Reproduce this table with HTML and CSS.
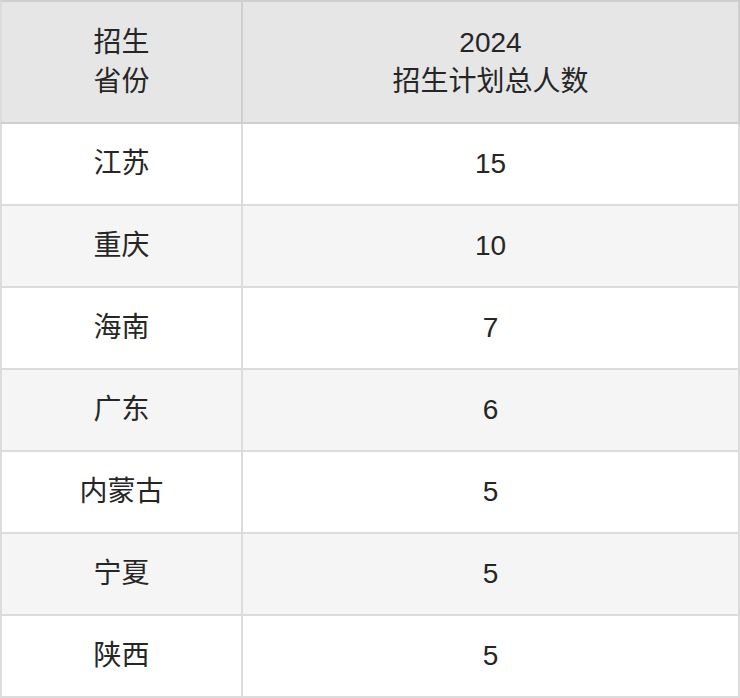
FILE: index.html
```html
<!DOCTYPE html>
<html lang="zh-CN">
<head>
<meta charset="utf-8">
<title>招生计划</title>
<link rel="stylesheet" href="styles.css">
</head>
<body>
<table class="plan">
  <thead>
    <tr>
      <th class="c1">招生<br>省份</th>
      <th class="c2">2024<br>招生计划总人数</th>
    </tr>
  </thead>
  <tbody>
    <tr><td class="c1">江苏</td><td class="c2">15</td></tr>
    <tr><td class="c1">重庆</td><td class="c2">10</td></tr>
    <tr><td class="c1">海南</td><td class="c2">7</td></tr>
    <tr><td class="c1">广东</td><td class="c2">6</td></tr>
    <tr><td class="c1">内蒙古</td><td class="c2">5</td></tr>
    <tr><td class="c1">宁夏</td><td class="c2">5</td></tr>
    <tr><td class="c1">陕西</td><td class="c2">5</td></tr>
  </tbody>
</table>
</body>
</html>
```
FILE: styles.css
```css
html, body {
  margin: 0;
  padding: 0;
  background: #ffffff;
}
.plan {
  width: 740px;
  border-collapse: separate;
  border-spacing: 0;
  table-layout: fixed;
  font-family: "Liberation Sans", "Noto Sans CJK SC", sans-serif;
  font-size: 28px;
  color: #262626;
}
.plan th, .plan td {
  box-sizing: border-box;
  padding: 0;
  text-align: center;
  vertical-align: middle;
  font-weight: normal;
  border-right: 2px solid #dcdcdc;
  border-bottom: 2px solid #dcdcdc;
}
.plan .c1 {
  width: 243px;
  border-left: 2px solid #dcdcdc;
}
.plan .c2 {
  width: 497px;
}
.plan th {
  height: 124px;
  background: #e6e6e6;
  border-color: #cfcfcf;
  border-top: 2px solid #cfcfcf;
  line-height: 39px;
}
.plan td {
  height: 82px;
  line-height: 32px;
}
.plan tbody tr:nth-child(even) td {
  background: #f5f5f5;
}
```
